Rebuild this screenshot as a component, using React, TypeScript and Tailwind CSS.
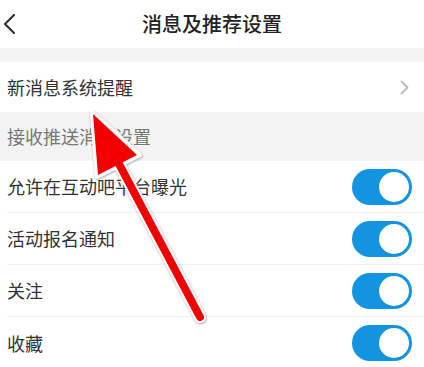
import React from "react";

const font = { fontFamily: '"Noto Sans CJK SC", "Noto Sans", sans-serif' };

function Toggle() {
  return (
    <div className="w-[60px] h-[36px] rounded-full bg-[#1394e0] relative flex items-center justify-end pr-[1px]">
      <div className="w-[34px] h-[34px] rounded-full bg-white border-[2px] border-[#1394e0]" />
    </div>
  );
}

function ToggleRow({ label, last }: { label: string; last?: boolean }) {
  return (
    <div className="pl-[7px] bg-white">
      <div className={`h-[52px] flex items-center justify-between pr-[12px] ${last ? "" : "border-b border-[#efefef]"}`}>
        <span className="text-[18px] text-[#333]">{label}</span>
        <Toggle />
      </div>
    </div>
  );
}

export default function App() {
  return (
    <div className="w-[424px] h-[367px] bg-white relative overflow-hidden" style={font}>
      {/* header */}
      <div className="h-[48px] flex items-center justify-center relative">
        <svg className="absolute left-[2px] top-[13px]" width="14" height="22" viewBox="0 0 14 22">
          <path d="M12 2 L3 11 L12 20" fill="none" stroke="#333" strokeWidth="2.2" strokeLinecap="round" strokeLinejoin="round" />
        </svg>
        <span className="text-[20px] font-medium text-[#222]">消息及推荐设置</span>
      </div>
      <div className="h-[14px] bg-[#f3f3f3]" />
      <div className="h-[50px] flex items-center justify-between pl-[7px] pr-[15px]">
        <span className="text-[18px] text-[#333]">新消息系统提醒</span>
        <svg width="9" height="15" viewBox="0 0 9 15">
          <path d="M1.5 1.5 L7.5 7.5 L1.5 13.5" fill="none" stroke="#bbb" strokeWidth="1.8" strokeLinecap="round" strokeLinejoin="round" />
        </svg>
      </div>
      <div className="h-[49px] bg-[#f3f3f3] flex items-center pl-[7px]">
        <span className="text-[18px] text-[#777]">接收推送消息设置</span>
      </div>
      <ToggleRow label="允许在互动吧平台曝光" />
      <ToggleRow label="活动报名通知" />
      <ToggleRow label="关注" />
      <ToggleRow label="收藏" last />

      {/* red arrow overlay */}
      <svg className="absolute left-0 top-0 pointer-events-none" width="424" height="367" viewBox="0 0 424 367">
        <defs>
          <filter id="sh" x="-20%" y="-20%" width="140%" height="140%">
            <feDropShadow dx="0.5" dy="1" stdDeviation="0.8" floodColor="#777" floodOpacity="0.7" />
          </filter>
        </defs>
        <g filter="url(#sh)">
          <line x1="118" y1="162" x2="200" y2="317" stroke="#ffffff" strokeWidth="12" strokeLinecap="round" />
          <polygon points="92,112 140,155 97,177" fill="#ffffff" stroke="#ffffff" strokeWidth="4" strokeLinejoin="round" />
        </g>
        <line x1="118" y1="162" x2="200" y2="317" stroke="#f20000" strokeWidth="8" strokeLinecap="round" />
        <polygon points="93,114 137,155 98,175" fill="#f20000" />
      </svg>
    </div>
  );
}
